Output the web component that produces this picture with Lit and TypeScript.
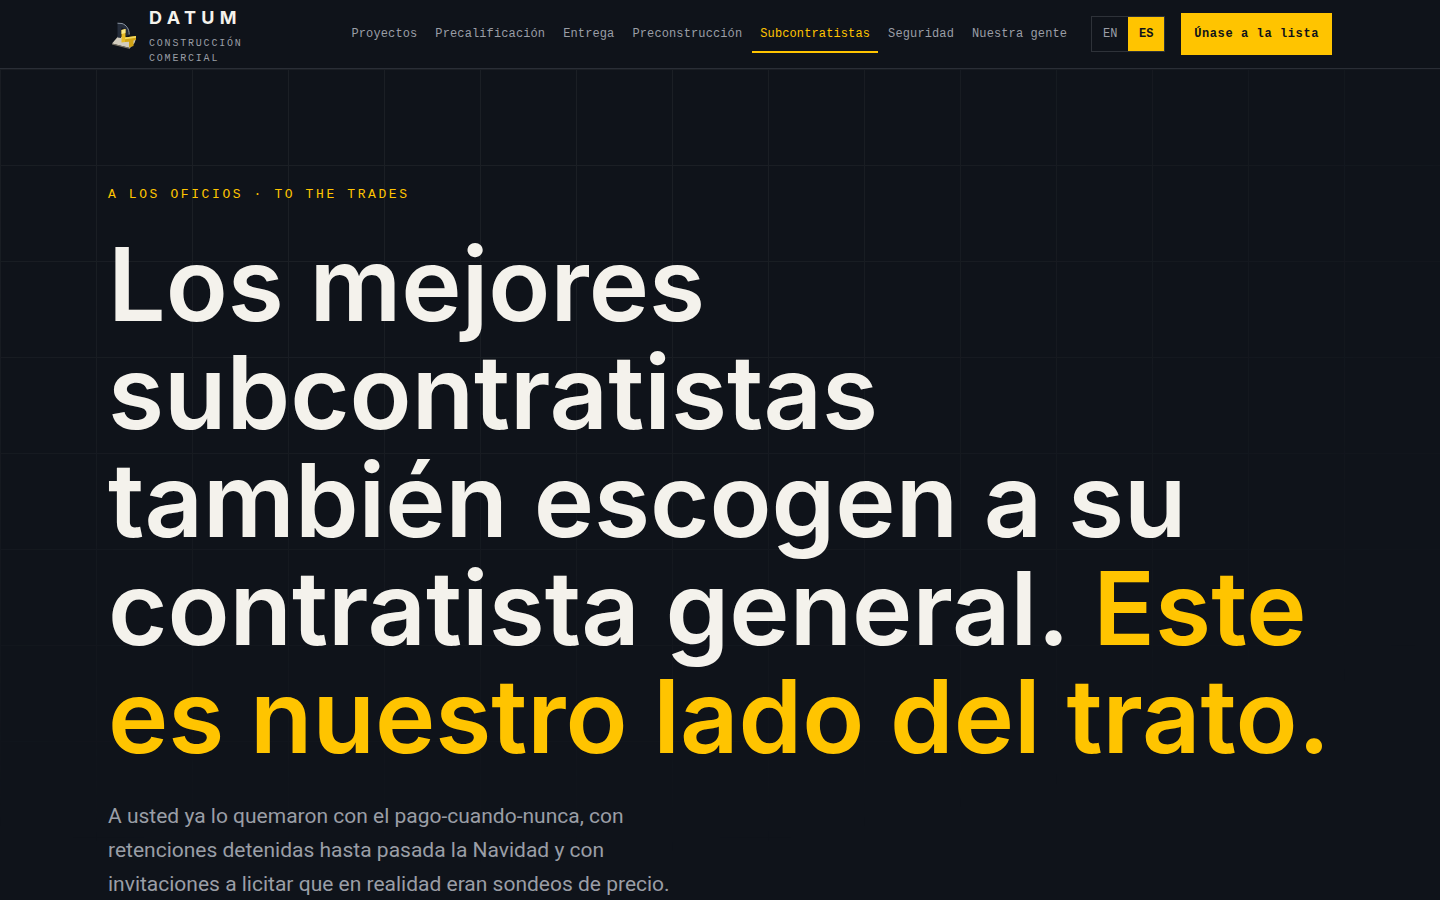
import { LitElement, html, css } from "lit";
import { customElement, state } from "lit/decorators.js";

@customElement("brand-mark")
class BrandMark extends LitElement {
  static styles = css`
    :host { display: block; }
    svg { display: block; }
  `;
  render() {
    return html`
      <svg width="32" height="32" viewBox="0 0 32 32" aria-hidden="true">
        <path d="M4 25.500 L10 18.500 L28 20.500 L26.500 25 L22 30 Z" fill="#d2ccbd" />
        <path d="M4 25.500 L22 30 L22 31 L4 26.500 Z" fill="#7d7666" />
        <path d="M9.500 5 L14 5.300 C18.500 6.800 21.500 11 21.500 17 L18 18 C18 13.500 16.500 10 13.500 9.500 L13 20 L9.500 19.500 Z" fill="#252d3b" />
        <path d="M9.500 5.200 L14 5.500 C18.500 7 21.200 11 21.200 16.500" fill="none" stroke="#8a94a1" stroke-width="1" />
        <path d="M13.500 12 L17.500 11 L17.500 19.500 L21 20 L21 23.500 L13.500 24.500 Z" fill="#e6ba22" />
        <path d="M13.500 12 L17.500 11 L17.500 15 L13.500 16 Z" fill="#f8e685" />
        <path d="M17 19.500 L28 18 L28 22 L25.500 22.500 L25.500 28 L21 29.500 L21 23.500 L17 24 Z" fill="#d0a315" />
        <path d="M17 19.500 L28 18 L28 19.800 L17 21.300 Z" fill="#f3d85c" />
      </svg>
    `;
  }
}

@customElement("app-root")
class AppRoot extends LitElement {
  @state() lang = "ES";

  links = [
    "Proyectos",
    "Precalificación",
    "Entrega",
    "Preconstrucción",
    "Subcontratistas",
    "Seguridad",
    "Nuestra gente",
  ];

  static styles = css`
    :host {
      display: block;
      min-height: 100vh;
      background: #0f131a;
      color: #f4f2ec;
      font-family: Roboto, "Noto Sans", sans-serif;
    }
    * { box-sizing: border-box; }
    .header {
      border-bottom: 1px solid #2a2e36;
    }
    .bar {
      display: flex;
      align-items: center;
      justify-content: space-between;
      height: 68px;
      padding: 0 108px;
    }
    .mono { font-family: "Liberation Mono", monospace; }
    .brand {
      display: flex;
      align-items: center;
      gap: 9px;
      color: inherit;
      text-decoration: none;
    }
    .names {
      display: flex;
      flex-direction: column;
      gap: 5px;
      width: 104px;
      padding-top: 2px;
    }
    .name {
      font-family: Inter, sans-serif;
      font-size: 18px;
      line-height: 26px;
      font-weight: 700;
      letter-spacing: 0.3em;
    }
    .tag {
      font-size: 10px;
      line-height: 15px;
      letter-spacing: 0.18em;
      color: #9a9ea6;
    }
    .right { display: flex; align-items: center; gap: 16px; }
    .nav { display: flex; gap: 2px; }
    .link {
      padding: 10px 8px 8px;
      border-bottom: 2px solid transparent;
      font-size: 12px;
      line-height: 18px;
      letter-spacing: 0.01em;
      color: #9a9ea6;
      text-decoration: none;
      white-space: nowrap;
    }
    .link.active { color: #ffc400; border-bottom-color: #ffc400; }
    .lang { display: flex; border: 1px solid #2e3239; }
    .choice {
      width: 36px;
      height: 34px;
      padding: 0;
      border: 0;
      background: transparent;
      color: #9a9ea6;
      font-size: 12px;
      cursor: pointer;
    }
    .choice.on { background: #ffc400; color: #0f131a; font-weight: 700; }
    .cta {
      padding: 12px 13px;
      background: #ffc400;
      color: #0f131a;
      font-size: 12px;
      line-height: 18px;
      font-weight: 700;
      letter-spacing: 0.05em;
      text-decoration: none;
      white-space: nowrap;
    }
    .hero { position: relative; padding: 115px 108px 0; }
    .grid {
      position: absolute;
      inset: 0;
      background-image:
        linear-gradient(to right, #1b1f25 1px, transparent 1px),
        linear-gradient(to bottom, #1b1f25 1px, transparent 1px);
      background-size: 96px 96px;
      mask-image: radial-gradient(ellipse 100% 90% at 30% 10%, #000 20%, transparent 95%);
      pointer-events: none;
    }
    .content { position: relative; }
    .eyebrow {
      margin: 0;
      font-size: 13px;
      line-height: 22px;
      letter-spacing: 0.2em;
      color: #ffc400;
    }
    .title {
      margin: 24px 0 0;
      font-family: Inter, sans-serif;
      font-size: 102px;
      line-height: 108px;
      font-weight: 600;
    }
    .accent { color: #ffc400; }
    .lead {
      max-width: 600px;
      margin: 29px 0 0;
      font-size: 21px;
      line-height: 34px;
      color: #9a9ea6;
    }
  `;

  render() {
    return html`
      <header class="header">
        <div class="bar">
          <a class="brand" href="#">
            <brand-mark></brand-mark>
            <span class="names mono">
              <span class="name">DATUM</span>
              <span class="tag">CONSTRUCCIÓN COMERCIAL</span>
            </span>
          </a>
          <div class="right">
            <nav class="nav mono">
              ${this.links.map(
                (l) => html`<a class="link ${l === "Subcontratistas" ? "active" : ""}" href="#">${l}</a>`
              )}
            </nav>
            <div class="lang" role="group" aria-label="Idioma">
              ${["EN", "ES"].map(
                (c) => html`<button
                  type="button"
                  class="choice mono ${c === this.lang ? "on" : ""}"
                  aria-pressed=${c === this.lang}
                  @click=${() => (this.lang = c)}
                >${c}</button>`
              )}
            </div>
            <a class="cta mono" href="#">Únase a la lista</a>
          </div>
        </div>
      </header>
      <main class="hero">
        <div class="grid"></div>
        <div class="content">
          <p class="eyebrow mono">A LOS OFICIOS · TO THE TRADES</p>
          <h1 class="title">
            Los mejores<br />subcontratistas<br />también escogen a su<br />contratista general.
            <span class="accent">Este<br />es nuestro lado del trato.</span>
          </h1>
          <p class="lead">
            A usted ya lo quemaron con el pago-cuando-nunca, con retenciones detenidas hasta pasada la
            Navidad y con invitaciones a licitar que en realidad eran sondeos de precio.
          </p>
        </div>
      </main>
    `;
  }
}
